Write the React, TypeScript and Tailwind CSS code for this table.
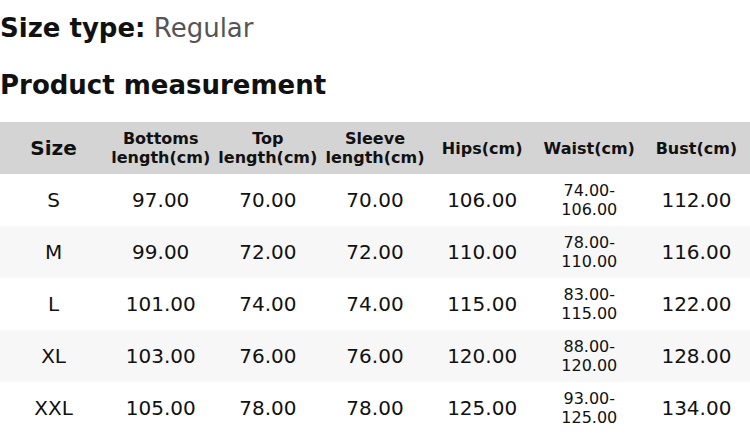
import React from "react";

const rows = [
  ["S", "97.00", "70.00", "70.00", "106.00", ["74.00-", "106.00"], "112.00"],
  ["M", "99.00", "72.00", "72.00", "110.00", ["78.00-", "110.00"], "116.00"],
  ["L", "101.00", "74.00", "74.00", "115.00", ["83.00-", "115.00"], "122.00"],
  ["XL", "103.00", "76.00", "76.00", "120.00", ["88.00-", "120.00"], "128.00"],
  ["XXL", "105.00", "78.00", "78.00", "125.00", ["93.00-", "125.00"], "134.00"],
] as const;

const heads: [string, string | null][] = [
  ["Bottoms", "length(cm)"],
  ["Top", "length(cm)"],
  ["Sleeve", "length(cm)"],
  ["Hips(cm)", null],
  ["Waist(cm)", null],
  ["Bust(cm)", null],
];

export default function App() {
  return (
    <div className="w-[750px] h-[434px] overflow-hidden bg-white text-[#111]" style={{ fontFamily: '"DejaVu Sans", Verdana, sans-serif' }}>
      <p className="pt-[13px] text-[26px] leading-[30px] whitespace-nowrap">
        <span className="font-bold">Size type:</span> <span className="text-[#555]">Regular</span>
      </p>
      <h2 className="mt-[27px] text-[26px] leading-[30px] font-bold whitespace-nowrap">Product measurement</h2>
      <table className="mt-[22px] w-full table-fixed border-collapse">
        <thead>
          <tr className="h-[52px] bg-[#d4d4d4]">
            <th className="text-[20px] font-bold p-0">Size</th>
            {heads.map(([a, b]) => (
              <th key={a} className="text-[16px] leading-[19px] font-bold p-0 whitespace-nowrap">
                {a}
                {b && (
                  <>
                    <br />
                    {b}
                  </>
                )}
              </th>
            ))}
          </tr>
        </thead>
        <tbody>
          {rows.map((r, i) => (
            <tr key={r[0]} className={`h-[52px] ${i % 2 === 1 ? "bg-[#f7f7f7]" : "bg-white"}`}>
              {r.map((c, j) =>
                Array.isArray(c) ? (
                  <td key={j} className="text-center text-[16px] leading-[19px] p-0">
                    {c[0]}
                    <br />
                    {c[1]}
                  </td>
                ) : (
                  <td key={j} className="text-center text-[20px] p-0">
                    {c as string}
                  </td>
                )
              )}
            </tr>
          ))}
        </tbody>
      </table>
    </div>
  );
}
